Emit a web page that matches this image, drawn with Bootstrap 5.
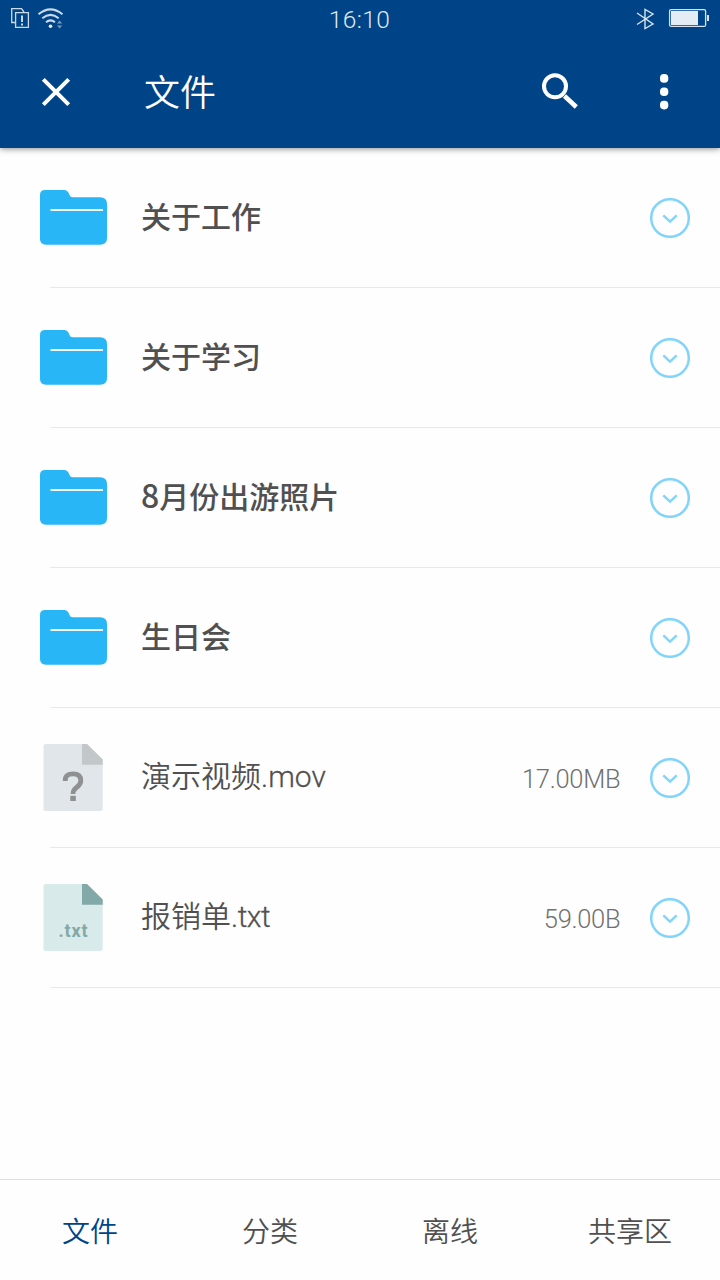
<!DOCTYPE html>
<html lang="zh-CN">
<head>
<meta charset="utf-8">
<meta name="viewport" content="width=device-width, initial-scale=1">
<title>文件</title>
<link href="https://cdn.jsdelivr.net/npm/bootstrap@5.3.0/dist/css/bootstrap.min.css" rel="stylesheet">
<style>
body{font-family:"Noto Sans CJK SC",sans-serif;font-weight:350;color:#505050;background:#fefefe;overflow:hidden}
svg{display:block;flex:none}
.app-top{background:#004488;height:148px;box-shadow:0 1px 6px rgba(0,0,0,.45);color:#fff;z-index:1}
.status{height:38px;padding:0 11px 0 10px}
.clock{font-family:Roboto,sans-serif;font-weight:300;font-size:24.5px;line-height:36px;padding-top:2px;letter-spacing:.4px;color:#dfe8f0}
.toolbar{height:110px;padding:0 48px 4px 40px}
.page-title{font-family:"Noto Sans CJK SC",sans-serif;font-weight:350;font-size:36px;line-height:52px;margin:0 0 2px 72px}
.file-row{height:140px;padding:0 30px 0 40px;background:none;border:0;color:#505050}
.file-row::after{content:"";position:absolute;left:50px;right:0;bottom:0;height:1px;background:#e8e8e8}
.thumb{width:68px;height:68px;margin-right:33px}
.fname{font-size:30px;line-height:44px;padding-bottom:6px;font-family:"Noto Sans CJK SC",sans-serif}
.folder .fname{font-weight:500}
.num{font-size:32px;line-height:1}
.doc .fname{font-weight:350}
.ext{font-family:Roboto,sans-serif;font-weight:300;-webkit-text-stroke:.3px #505050}
.ext-txt{letter-spacing:-.5px}
.fsize{font-family:Roboto,sans-serif;font-size:25.5px;line-height:36px;color:#707070;font-weight:300;letter-spacing:-.3px;margin-right:29.700px;padding-top:2px}
.tabs{height:101px;border-top:1px solid #e0e0e0}
.tabs a{font-size:28px;line-height:40px;color:#505050}
.tabs a.active{color:#004488}
</style>
</head>
<body class="vh-100 d-flex flex-column">
<svg class="d-none">
<symbol id="folder" viewBox="0 0 68 68"><path fill="#29b6f6" d="M0 11Q0 6 5 6H24Q28 6 29.500 11Q30 13.300 33 13.300H60Q67 13.300 67 20V54Q67 60.700 60 60.700H6Q0 60.700 0 55Z"/><path d="M10.500 26H63" stroke="#f3fbff" stroke-width="2"/></symbol>
<symbol id="chev" viewBox="0 0 40 40"><circle cx="20" cy="20" r="18.800" fill="none" stroke="#81d4fa" stroke-width="2.500"/><path d="M13.300 17.300L20 23.700L26.700 17.300" fill="none" stroke="#81d4fa" stroke-width="2.400"/></symbol>
</svg>
<header class="app-top position-relative flex-shrink-0">
<div class="status row g-0 align-items-center">
<div class="col d-flex">
<svg width="54" height="38" viewBox="0 0 54 38" fill="none" stroke="#cbd9e7"><path d="M5 22.500H1.700V8.700H11.500L14 12" stroke-width="1.300"/><path d="M5.600 12.600H18.400V27.400H5.600Z" stroke-width="1.300"/><path d="M12 15.500V22M12 23.500V25.500" stroke-width="2"/><g stroke-width="2"><path d="M28.500 14.300Q40.500 4.500 52.500 14.300M32.300 18.300Q40.500 11.500 48.700 18.300M36 22.300Q40.500 18.500 45 22.300"/></g><circle cx="40.500" cy="26.300" r="1.800" fill="#e5edf4" stroke="none"/><path d="M47 23.500L49.600 20.500L52.200 23.500ZM47 25.500H52.200L49.600 28.500Z" fill="#779bbf" stroke="none"/></svg>
</div>
<div class="col-auto clock">16:10</div>
<div class="col d-flex justify-content-end">
<svg width="74" height="38" viewBox="635 0 74 38" fill="none" stroke="#d7e2ec"><path d="M637 13L653 24L645 28.500V9.500L653 14L637 24.500" stroke-width="1.400"/><rect x="669.600" y="9.600" width="36" height="16.800" rx="1.500" stroke-width="1.300"/><path d="M671 11H698V25H671Z" fill="#e5edf4" stroke="none"/><path d="M708 15V21" stroke-width="2"/></svg>
</div>
</div>
<div class="toolbar d-flex align-items-center">
<svg width="32" height="32" viewBox="0 0 32 32"><path d="M3.300 3.300L28.700 28.700M28.700 3.300L3.300 28.700" stroke="#fff" stroke-width="4" transform="translate(0 1)"/></svg>
<h1 class="page-title me-auto">文件</h1>
<svg width="36" height="36" viewBox="0 0 36 36" fill="none" stroke="#fff"><circle cx="13" cy="13.300" r="11" stroke-width="4"/><path d="M22.500 23L34.300 34" stroke-width="4.500"/></svg>
<svg width="94" height="38" viewBox="-78 0 94 38" fill="#fff"><rect x="4" y="2" width="8.300" height="8.700" rx="3.800"/><rect x="4" y="15.400" width="8.300" height="8.700" rx="3.800"/><rect x="4" y="28.700" width="8.300" height="8.700" rx="3.800"/></svg>
</div>
</header>
<main class="list-group list-group-flush flex-grow-1">
<div class="list-group-item file-row folder d-flex align-items-center"><svg class="thumb"><use href="#folder"/></svg><span class="fname me-auto">关于工作</span><svg width="40" height="40"><use href="#chev"/></svg></div>
<div class="list-group-item file-row folder d-flex align-items-center"><svg class="thumb"><use href="#folder"/></svg><span class="fname me-auto">关于学习</span><svg width="40" height="40"><use href="#chev"/></svg></div>
<div class="list-group-item file-row folder d-flex align-items-center"><svg class="thumb"><use href="#folder"/></svg><span class="fname me-auto"><span class="num">8</span>月份出游照片</span><svg width="40" height="40"><use href="#chev"/></svg></div>
<div class="list-group-item file-row folder d-flex align-items-center"><svg class="thumb"><use href="#folder"/></svg><span class="fname me-auto">生日会</span><svg width="40" height="40"><use href="#chev"/></svg></div>
<div class="list-group-item file-row doc d-flex align-items-center">
<svg class="thumb" viewBox="0 0 68 68"><path d="M6 0H47L62.700 15.500V65Q62.700 67 60.700 67H5.500Q3.500 67 3.500 65V2.500Q3.500 0 6 0Z" fill="#e0e6e9"/><path d="M42 0H47L62.700 15.500V20.700H42Z" fill="#c2c7ca"/><path d="M25.200 37Q25 29.800 33 29.800Q40.800 29.800 40.800 36.500Q40.800 40.500 36.500 43.500Q33 46 33 50" fill="none" stroke="#8e9091" stroke-width="4.800"/><path d="M30.300 51.800H35.800V57H30.300Z" fill="#8e9091"/></svg>
<span class="fname me-auto">演示视频<span class="ext">.mov</span></span><span class="fsize">17.00MB</span><svg width="40" height="40"><use href="#chev"/></svg></div>
<div class="list-group-item file-row doc d-flex align-items-center">
<svg class="thumb" viewBox="0 0 68 68"><path d="M6 0H47L62.700 15.500V65Q62.700 67 60.700 67H5.500Q3.500 67 3.500 65V2.500Q3.500 0 6 0Z" fill="#d8eae9"/><path d="M42 0H47L62.700 15.500V20.700H42Z" fill="#82a9a7"/><text x="33" y="53" text-anchor="middle" textLength="29" fill="#82a9a7" font-family="Roboto" font-weight="700" font-size="18">.txt</text></svg>
<span class="fname me-auto">报销单<span class="ext ext-txt">.txt</span></span><span class="fsize">59.00B</span><svg width="40" height="40"><use href="#chev"/></svg></div>
</main>
<nav class="tabs row g-0 align-items-center text-center flex-shrink-0">
<a class="col text-decoration-none active" href="#">文件</a>
<a class="col text-decoration-none" href="#">分类</a>
<a class="col text-decoration-none" href="#">离线</a>
<a class="col text-decoration-none" href="#">共享区</a>
</nav>
<script src="https://cdn.jsdelivr.net/npm/bootstrap@5.3.0/dist/js/bootstrap.bundle.min.js"></script>
</body>
</html>
